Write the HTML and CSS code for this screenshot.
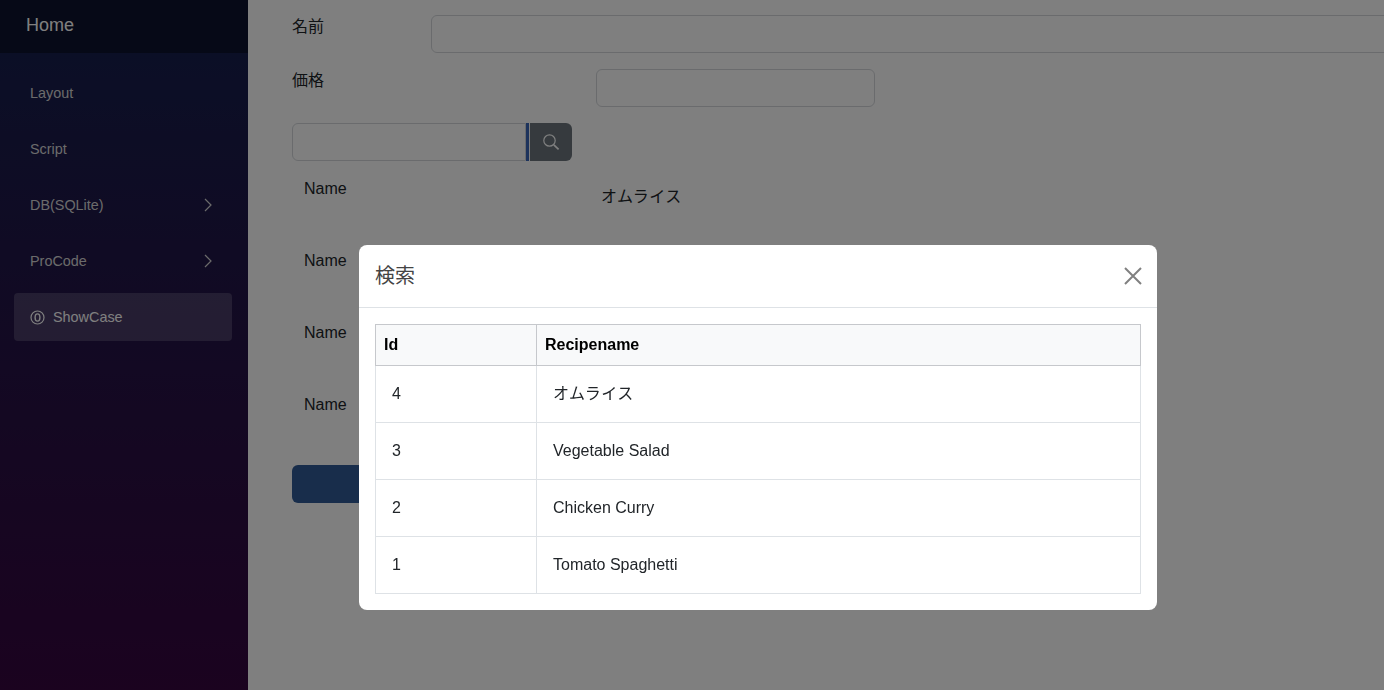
FILE: index.html
```html
<!DOCTYPE html>
<html lang="ja">
<head>
<meta charset="utf-8">
<title>ShowCase</title>
<link rel="stylesheet" href="styles.css">
</head>
<body>
<div class="app">
  <aside class="sidebar">
    <div class="brand">Home</div>
    <nav class="nav">
      <a class="nav-item">Layout</a>
      <a class="nav-item">Script</a>
      <a class="nav-item">DB(SQLite)
        <svg class="chev" width="10" height="14" viewBox="0 0 10 14"><path d="M2 1l6 6-6 6" fill="none" stroke="currentColor" stroke-width="1.2"/></svg>
      </a>
      <a class="nav-item">ProCode
        <svg class="chev" width="10" height="14" viewBox="0 0 10 14"><path d="M2 1l6 6-6 6" fill="none" stroke="currentColor" stroke-width="1.2"/></svg>
      </a>
      <a class="nav-item active">
        <svg class="zero" width="15" height="15" viewBox="0 0 15 15"><circle cx="7.5" cy="7.5" r="6.5" fill="none" stroke="currentColor" stroke-width="1.2"/><ellipse cx="7.5" cy="7.5" rx="2.4" ry="3.6" fill="none" stroke="currentColor" stroke-width="1.4"/></svg>
        ShowCase
      </a>
    </nav>
  </aside>
  <main class="main">
    <div class="row row-name">
      <label class="label">名前</label>
      <input class="input input-name" type="text">
    </div>
    <div class="row row-price">
      <label class="label">価格</label>
      <input class="input input-price" type="text">
    </div>
    <div class="search">
      <input class="input input-search" type="text">
      <span class="focus-bar"></span>
      <button class="search-btn" type="button">
        <svg width="18" height="18" viewBox="0 0 18 18"><circle cx="7.5" cy="7.5" r="5.7" fill="none" stroke="currentColor" stroke-width="1.2"/><path d="M11.8 11.8L16.6 16.4" stroke="currentColor" stroke-width="1.7" fill="none"/></svg>
      </button>
    </div>
    <div class="fields">
      <div class="field"><span class="field-name">Name</span><span class="field-value">オムライス</span></div>
      <div class="field"><span class="field-name">Name</span></div>
      <div class="field"><span class="field-name">Name</span></div>
      <div class="field"><span class="field-name">Name</span></div>
    </div>
    <button class="submit" type="button"></button>
  </main>
</div>
<div class="backdrop"></div>
<div class="modal-wrap">
  <div class="modal">
    <header class="modal-head">
      <h5 class="modal-title">検索</h5>
      <svg class="close" width="18" height="18" viewBox="0 0 18 18"><path d="M1 1l16 16M17 1L1 17" stroke="currentColor" stroke-width="2" fill="none"/></svg>
    </header>
    <div class="modal-body">
      <table class="grid">
        <thead>
          <tr><th class="col-id">Id</th><th>Recipename</th></tr>
        </thead>
        <tbody>
          <tr><td><span class="cell">4</span></td><td class="ja"><span class="cell">オムライス</span></td></tr>
          <tr><td><span class="cell">3</span></td><td><span class="cell">Vegetable Salad</span></td></tr>
          <tr><td><span class="cell">2</span></td><td><span class="cell">Chicken Curry</span></td></tr>
          <tr><td><span class="cell">1</span></td><td><span class="cell">Tomato Spaghetti</span></td></tr>
        </tbody>
      </table>
    </div>
  </div>
</div>
</body>
</html>
```
FILE: styles.css
```css
* { box-sizing: border-box; }
html, body { margin: 0; height: 100%; overflow: hidden; }
body {
  font-family: "Liberation Sans", "Noto Sans CJK JP", sans-serif;
  font-size: 16px;
  color: #212529;
  background: #fff;
}
.app { display: flex; height: 690px; }

.sidebar {
  width: 248px;
  flex: none;
  background: linear-gradient(180deg, #14204e 0%, #36063f 100%);
  display: flex;
  flex-direction: column;
}
.brand {
  height: 53px;
  padding: 15px 0 0 26px;
  font-size: 18px;
  line-height: 21px;
  color: #fff;
  background: rgba(0, 0, 0, 0.4);
}
.nav { display: flex; flex-direction: column; padding: 16px 16px 0 14px; }
.nav-item {
  height: 48px;
  margin-bottom: 8px;
  padding: 0 20px 0 16px;
  display: flex;
  align-items: center;
  font-size: 14.4px;
  color: #d7d7d7;
  border-radius: 4px;
}
.chev { margin-left: auto; margin-right: -1px; }
.zero { margin-right: 8px; }
.active { background: rgba(255, 255, 255, 0.17); color: #fff; }

.main { flex: 1; min-width: 0; padding: 15px 0 0 44px; position: relative; }
.row { display: flex; height: 38px; margin-bottom: 16px; }
.label { line-height: 24px; }
.input {
  display: block;
  height: 38px;
  background: #fff;
  border: 1px solid #d4d7db;
  border-radius: 6px;
}
.row-name .label { width: 139px; }
.input-name { width: 1000px; flex: none; }
.row-price .label { width: 304px; }
.input-price { width: 279px; flex: none; }
.row-price .label, .row-name .label { flex: none; }

.search { display: flex; width: 280px; height: 38px; }
.input-search { width: 234px; border-radius: 6px 0 0 6px; }
.focus-bar { width: 3px; background: #3a66b8; }
.search-btn {
  width: 42px;
  margin-left: 1px;
  padding: 0;
  border: 0;
  border-radius: 0 6px 6px 0;
  background: #6c757d;
  color: #fff;
  display: flex;
  align-items: center;
  justify-content: center;
}

.fields { padding-top: 16px; }
.field { display: flex; height: 72px; }
.field-name { width: 297px; padding-left: 12px; padding-top: 3px; line-height: 18px; flex: none; }
.field-value { padding-top: 10px; font-size: 16px; line-height: 20px; margin-left: 12px; letter-spacing: 0.5px; }

.submit {
  display: block;
  width: 280px;
  height: 38px;
  border: 0;
  border-radius: 6px;
  background: #305a96;
}

.backdrop {
  position: fixed;
  inset: 0;
  background: rgba(0, 0, 0, 0.5);
}
.modal-wrap {
  position: fixed;
  left: 359px;
  top: 245px;
  width: 798px;
}
.modal {
  background: #fff;
  border-radius: 8px;
  height: 365px;
  display: flex;
  flex-direction: column;
}
.modal-head {
  height: 63px;
  flex: none;
  padding: 0 15px 0 16px;
  border-bottom: 1px solid #dee2e6;
  display: flex;
  align-items: center;
  justify-content: space-between;
}
.modal-title { margin: 0; font-size: 20px; font-weight: 400; line-height: 24px; color: #444; }
.close { color: #808080; margin-top: 0; }
.modal-body { padding: 16px; }

.grid {
  width: 766px;
  border-collapse: collapse;
  table-layout: fixed;
  font-size: 16px;
}
.grid th {
  height: 41px;
  padding: 0 8px;
  text-align: left;
  font-weight: 700;
  color: #000;
  background: #f8f9fa;
  border: 1px solid #c6c8cc;
}
.col-id { width: 161px; }
.grid td {
  height: 57px;
  padding: 0 8px;
  border: 1px solid #dee2e6;
  color: #212529;
}
.grid td.ja { padding-bottom: 4px; letter-spacing: 0.5px; }
.cell { padding-left: 8px; }
```
